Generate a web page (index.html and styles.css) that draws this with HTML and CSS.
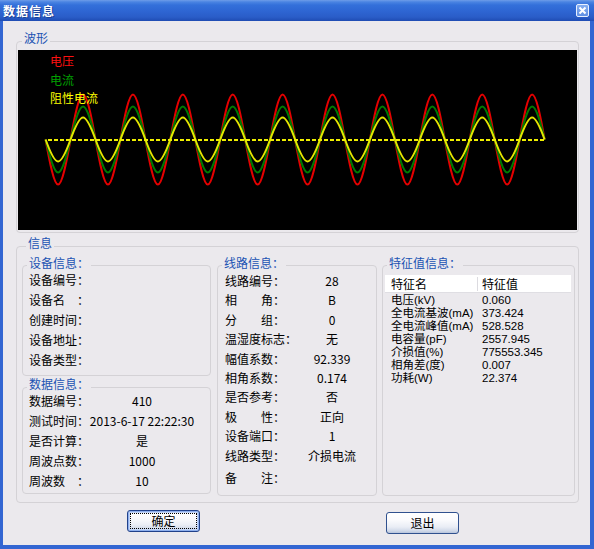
FILE: index.html
```html
<!DOCTYPE html>
<html lang="zh-CN">
<head>
<meta charset="utf-8">
<title>数据信息</title>
<link rel="stylesheet" href="styles.css">
</head>
<body>
<div class="window">
  <header class="titlebar">
    <span class="title">数据信息</span>
    <span class="close" aria-label="关闭">
      <svg width="11" height="11" viewBox="0 0 11 11"><path d="M2.5 2.5 8.5 8.5M8.5 2.5 2.5 8.5" stroke="#fff" stroke-width="2" fill="none"/></svg>
    </span>
  </header>
  <main class="frame">
    <section class="group wave">
      <div class="cap">波形</div>
      <div class="scope">
        <svg class="plot" width="559" height="180" viewBox="0 0 559 180">
          <path class="w-red" d="M27.6,89.5 c4.069,23.05 8.397,45 12.475,45 s8.406,-21.95 12.475,-45 s8.397,-45 12.475,-45 s8.406,21.95 12.475,45 s8.397,45 12.475,45 s8.406,-21.95 12.475,-45 s8.397,-45 12.475,-45 s8.406,21.95 12.475,45 s8.397,45 12.475,45 s8.406,-21.95 12.475,-45 s8.397,-45 12.475,-45 s8.406,21.95 12.475,45 s8.397,45 12.475,45 s8.406,-21.95 12.475,-45 s8.397,-45 12.475,-45 s8.406,21.95 12.475,45 s8.397,45 12.475,45 s8.406,-21.95 12.475,-45 s8.397,-45 12.475,-45 s8.406,21.95 12.475,45 s8.397,45 12.475,45 s8.406,-21.95 12.475,-45 s8.397,-45 12.475,-45 s8.406,21.95 12.475,45 s8.397,45 12.475,45 s8.406,-21.95 12.475,-45 s8.397,-45 12.475,-45 s8.406,21.95 12.475,45 s8.397,45 12.475,45 s8.406,-21.95 12.475,-45 s8.397,-45 12.475,-45 s8.406,21.95 12.475,45 s8.397,45 12.475,45 s8.406,-21.95 12.475,-45 s8.397,-45 12.475,-45 s8.406,21.95 12.475,45 s8.397,45 12.475,45 s8.406,-21.95 12.475,-45 s8.397,-45 12.475,-45 s8.406,21.95 12.475,45"/>
          <path class="w-green" d="M27.6,89.5 c4.069,16.91 8.397,33 12.475,33 s8.406,-16.09 12.475,-33 s8.397,-33 12.475,-33 s8.406,16.09 12.475,33 s8.397,33 12.475,33 s8.406,-16.09 12.475,-33 s8.397,-33 12.475,-33 s8.406,16.09 12.475,33 s8.397,33 12.475,33 s8.406,-16.09 12.475,-33 s8.397,-33 12.475,-33 s8.406,16.09 12.475,33 s8.397,33 12.475,33 s8.406,-16.09 12.475,-33 s8.397,-33 12.475,-33 s8.406,16.09 12.475,33 s8.397,33 12.475,33 s8.406,-16.09 12.475,-33 s8.397,-33 12.475,-33 s8.406,16.09 12.475,33 s8.397,33 12.475,33 s8.406,-16.09 12.475,-33 s8.397,-33 12.475,-33 s8.406,16.09 12.475,33 s8.397,33 12.475,33 s8.406,-16.09 12.475,-33 s8.397,-33 12.475,-33 s8.406,16.09 12.475,33 s8.397,33 12.475,33 s8.406,-16.09 12.475,-33 s8.397,-33 12.475,-33 s8.406,16.09 12.475,33 s8.397,33 12.475,33 s8.406,-16.09 12.475,-33 s8.397,-33 12.475,-33 s8.406,16.09 12.475,33 s8.397,33 12.475,33 s8.406,-16.09 12.475,-33 s8.397,-33 12.475,-33 s8.406,16.09 12.475,33"/>
          <path class="w-yellow" d="M27.6,89.5 c4.069,11.27 8.397,22 12.475,22 s8.406,-10.73 12.475,-22 s8.397,-22 12.475,-22 s8.406,10.73 12.475,22 s8.397,22 12.475,22 s8.406,-10.73 12.475,-22 s8.397,-22 12.475,-22 s8.406,10.73 12.475,22 s8.397,22 12.475,22 s8.406,-10.73 12.475,-22 s8.397,-22 12.475,-22 s8.406,10.73 12.475,22 s8.397,22 12.475,22 s8.406,-10.73 12.475,-22 s8.397,-22 12.475,-22 s8.406,10.73 12.475,22 s8.397,22 12.475,22 s8.406,-10.73 12.475,-22 s8.397,-22 12.475,-22 s8.406,10.73 12.475,22 s8.397,22 12.475,22 s8.406,-10.73 12.475,-22 s8.397,-22 12.475,-22 s8.406,10.73 12.475,22 s8.397,22 12.475,22 s8.406,-10.73 12.475,-22 s8.397,-22 12.475,-22 s8.406,10.73 12.475,22 s8.397,22 12.475,22 s8.406,-10.73 12.475,-22 s8.397,-22 12.475,-22 s8.406,10.73 12.475,22 s8.397,22 12.475,22 s8.406,-10.73 12.475,-22 s8.397,-22 12.475,-22 s8.406,10.73 12.475,22 s8.397,22 12.475,22 s8.406,-10.73 12.475,-22 s8.397,-22 12.475,-22 s8.406,10.73 12.475,22"/>
          <line class="zero" x1="30" y1="90" x2="527" y2="90"/>
          <text class="lg lg-red" x="32" y="15.6">电压</text>
          <text class="lg lg-green" x="32" y="34.6">电流</text>
          <text class="lg lg-yellow" x="32" y="53.3">阻性电流</text>
        </svg>
      </div>
    </section>

    <section class="group info">
      <div class="cap">信息</div>
      <div class="panels">
        <div class="leftcol">
          <div class="sub dev">
            <div class="subcap">设备信息：</div>
            <div class="rows">
              <div class="row"><span class="k">设备编号：</span><span class="v"></span></div>
              <div class="row"><span class="k">设备名　：</span><span class="v"></span></div>
              <div class="row"><span class="k">创建时间：</span><span class="v"></span></div>
              <div class="row"><span class="k">设备地址：</span><span class="v"></span></div>
              <div class="row"><span class="k">设备类型：</span><span class="v"></span></div>
            </div>
          </div>
          <div class="sub data">
            <div class="subcap">数据信息：</div>
            <div class="rows">
              <div class="row"><span class="k">数据编号：</span><span class="v">410</span></div>
              <div class="row"><span class="k">测试时间：</span><span class="v">2013-6-17 22:22:30</span></div>
              <div class="row"><span class="k">是否计算：</span><span class="v">是</span></div>
              <div class="row"><span class="k">周波点数：</span><span class="v">1000</span></div>
              <div class="row"><span class="k">周波数　：</span><span class="v">10</span></div>
            </div>
          </div>
        </div>

        <div class="sub line">
          <div class="subcap">线路信息：</div>
          <div class="rows">
            <div class="row"><span class="k">线路编号：</span><span class="v">28</span></div>
            <div class="row"><span class="k">相　　角：</span><span class="v">B</span></div>
            <div class="row"><span class="k">分　　组：</span><span class="v">0</span></div>
            <div class="row"><span class="k">温湿度标志：</span><span class="v">无</span></div>
            <div class="row"><span class="k">幅值系数：</span><span class="v">92.339</span></div>
            <div class="row"><span class="k">相角系数：</span><span class="v">0.174</span></div>
            <div class="row"><span class="k">是否参考：</span><span class="v">否</span></div>
            <div class="row"><span class="k">极　　性：</span><span class="v">正向</span></div>
            <div class="row"><span class="k">设备端口：</span><span class="v">1</span></div>
            <div class="row"><span class="k">线路类型：</span><span class="v">介损电流</span></div>
            <div class="row last"><span class="k">备　　注：</span><span class="v"></span></div>
          </div>
        </div>

        <div class="sub feat">
          <div class="subcap">特征值信息：</div>
          <div class="list">
            <div class="lhead"><span class="c1">特征名</span><span class="c2">特征值</span></div>
            <div class="lbody">
              <span class="c1">电压(kV)</span><span class="c2">0.060</span>
              <span class="c1">全电流基波(mA)</span><span class="c2">373.424</span>
              <span class="c1">全电流峰值(mA)</span><span class="c2">528.528</span>
              <span class="c1">电容量(pF)</span><span class="c2">2557.945</span>
              <span class="c1">介损值(%)</span><span class="c2">775553.345</span>
              <span class="c1">相角差(度)</span><span class="c2">0.007</span>
              <span class="c1">功耗(W)</span><span class="c2">22.374</span>
            </div>
          </div>
        </div>
      </div>
    </section>

    <div class="buttons">
      <button class="btn focus" type="button">确定</button>
      <button class="btn exit" type="button">退出</button>
    </div>
  </main>
</div>
</body>
</html>
```

FILE: styles.css
```css
* { box-sizing: border-box; margin: 0; padding: 0; }
html, body { width: 594px; height: 549px; overflow: hidden; }
body {
  font-family: "Noto Sans CJK SC", "Noto Sans", sans-serif;
  font-size: 12px;
  color: #000;
  background: #ebe9ed;
}
.window { display: flex; flex-direction: column; width: 594px; height: 549px; }

.titlebar {
  flex: none;
  height: 21px;
  display: flex;
  align-items: center;
  justify-content: space-between;
  padding: 0 5px 0 3px;
  background: linear-gradient(#6f9de8 0, #4a84e2 2px, #3470da 5px, #2e66d3 11px, #2a5dc8 17px, #1f4cb3 21px);
}
.title {
  color: #fff;
  font-weight: 700;
  font-size: 12px;
  letter-spacing: 1px;
  line-height: 14px;
  text-shadow: 1px 1px 0 #1a3f95;
}
.close {
  width: 13px;
  height: 13px;
  border: 1px solid #e8f0ff;
  border-radius: 2px;
  background: linear-gradient(#86aef0, #5f8fe4);
  display: flex;
  align-items: center;
  justify-content: center;
}
.close svg { display: block; }

.frame {
  flex: 1;
  border-style: solid;
  border-color: #3366d2;
  border-width: 0 4px 4px 3px;
  background: #ebe9ed;
  padding: 20px 0 0 13px;
}

.group {
  width: 563px;
  border: 1px solid #d4d2d6;
  border-radius: 4px;
}
.cap, .subcap {
  width: fit-content;
  height: 14px;
  line-height: 14px;
  padding: 0 2px;
  background: #ebe9ed;
  color: #2153b3;
}
.cap { margin: -11px 0 0 4px; }
.subcap { margin: -10px 0 0 4px; }

.wave { height: 192px; padding: 0 1px; }
.scope { margin-top: 5px; height: 180px; background: #000; }
.plot { display: block; }
.w-red { fill: none; stroke: #e40000; stroke-width: 2; }
.w-green { fill: none; stroke: #007a00; stroke-width: 2; }
.w-yellow { fill: none; stroke: #e6e600; stroke-width: 2; }
.zero { stroke: #f0f000; stroke-width: 2; stroke-dasharray: 4 2; }
.lg { font-family: "Noto Sans CJK SC", sans-serif; font-size: 12px; }
.lg-red { fill: #ff1010; }
.lg-green { fill: #00a000; }
.lg-yellow { fill: #ffff00; }

.info {
  margin-top: 13px;
  height: 257px;
  padding: 0 3px 0 5px;
}
.panels { margin-top: 15px; display: flex; align-items: flex-start; }
.leftcol { width: 189px; display: flex; flex-direction: column; }
.sub { border: 1px solid #d4d2d6; border-radius: 4px; }
.dev { height: 111px; }
.data { height: 107px; margin-top: 11px; }
.data .subcap { margin-top: -11px; }
.line { width: 160px; height: 231px; margin-left: 6px; }
.feat { width: 193px; height: 231px; margin-left: 5px; }

.dev .rows, .data .rows { padding-left: 6px; }
.dev .row, .data .row {
  display: grid;
  grid-template-columns: 60px 106px;
  height: 20px;
  line-height: 20px;
  white-space: nowrap;
}
.v { text-align: center; white-space: nowrap; }

.line .rows { padding: 1px 0 0 7px; }
.line .row {
  display: grid;
  grid-template-columns: 72px 70px;
  height: 19.4px;
  line-height: 19.4px;
  white-space: nowrap;
}
.line .row.last { margin-top: 3px; }

.list { margin: 5px 0 0 2px; width: 186px; }
.lhead {
  display: grid;
  grid-template-columns: 92px 1fr;
  height: 18px;
  line-height: 17px;
  background: #fff;
  border-bottom: 1px solid #dfdee3;
}
.lhead .c1 { padding-left: 6px; }
.lhead .c2 { padding-left: 4px; border-left: 1px solid #dcdbe0; margin: 2px 0 1px; line-height: 14px; }
.lbody {
  display: grid;
  grid-template-columns: 92px 1fr;
  padding-top: 1px;
  font-family: "Liberation Sans", "Noto Sans CJK SC", sans-serif;
  font-size: 11.5px;
  line-height: 13px;
  white-space: nowrap;
}
.lbody .c1 { padding-left: 6px; height: 13px; }
.lbody .c2 { padding-left: 5px; height: 13px; }

.buttons {
  display: flex;
  align-items: flex-start;
  margin-top: 7px;
  padding-left: 111px;
}
.btn {
  width: 73px;
  height: 22px;
  border: 1px solid #21418a;
  border-radius: 3px;
  background: linear-gradient(#ffffff 0, #fbfbfd 35%, #e9edf5 70%, #cfd8e8 90%, #b8c4dc 100%);
  font-family: "Noto Sans CJK SC", sans-serif;
  font-size: 12px;
  line-height: 14px;
  color: #000;
  display: flex;
  align-items: center;
  justify-content: center;
  padding-bottom: 1px;
}
.btn.focus {
  box-shadow: inset 0 0 0 1px #8fb0ee, inset 0 0 0 2px #c5d6f6;
  outline: 1px dotted #000;
  outline-offset: -4px;
}
.btn.exit { margin-left: 186px; margin-top: 2px; border-color: #30518f; }
```
